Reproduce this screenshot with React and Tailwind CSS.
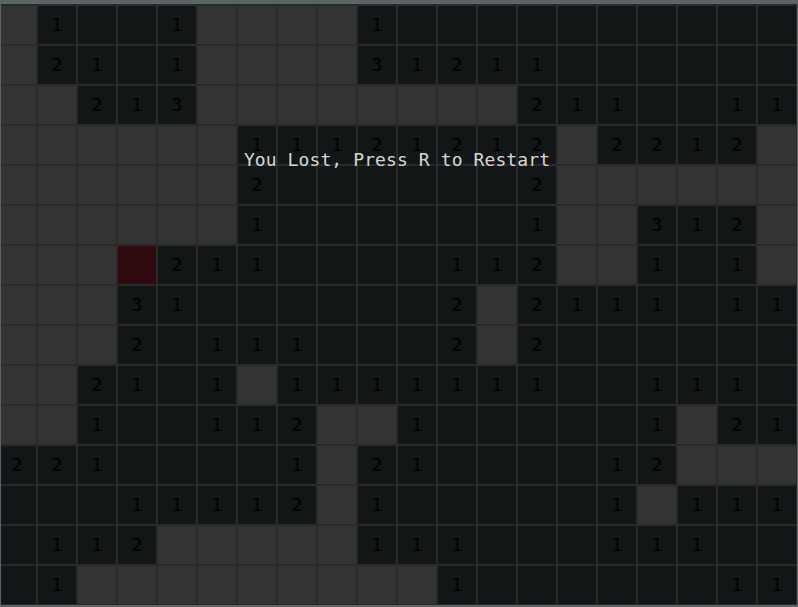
const board = [
  '.1001....10000000000',
  '.2101....31211000000',
  '..213........2110011',
  '......11121212.2212.',
  '......20000002......',
  '......10000001..312.',
  '...M2110000112..101.',
  '...310000002.2111011',
  '...201110002.2000000',
  '..2101.1111111001110',
  '..100112..1000001.21',
  '22100001.21000012...',
  '00011112.1000001.111',
  '0112.....11100011100',
  '01.........100000011',
];

function Cell({ v }) {
  if (v === '.') return <div className="bg-[#333333]" />;
  if (v === 'M') return <div className="bg-[#300a0e]" />;
  return (
    <div className="flex items-center justify-center bg-[#121617] text-[18px] leading-none text-black font-['DejaVu_Sans_Mono',monospace]">
      {v === '0' ? '' : v}
    </div>
  );
}

export default function App() {
  return (
    <div className="h-[607px] w-[798px] overflow-hidden bg-[#5b6467] pb-[2px] pl-[1px] pr-[1px] pt-[4px]">
      <div className="relative h-full overflow-hidden bg-[#2a2a2a]">
        <div className="ml-[-3px] grid grid-cols-[repeat(20,38px)] grid-rows-[repeat(15,38px)] gap-[2px] pt-[2px]">
          {board.map((row, r) =>
            row.split('').map((v, c) => <Cell key={`${r}-${c}`} v={v} />)
          )}
        </div>
        <div className="pointer-events-none absolute inset-x-0 top-[147px] flex justify-center">
          <span className="pr-[4px] text-[18px] leading-none tracking-[0.1px] text-[#d6d6d6] font-['DejaVu_Sans_Mono',monospace]">
            You Lost, Press R to Restart
          </span>
        </div>
      </div>
    </div>
  );
}
